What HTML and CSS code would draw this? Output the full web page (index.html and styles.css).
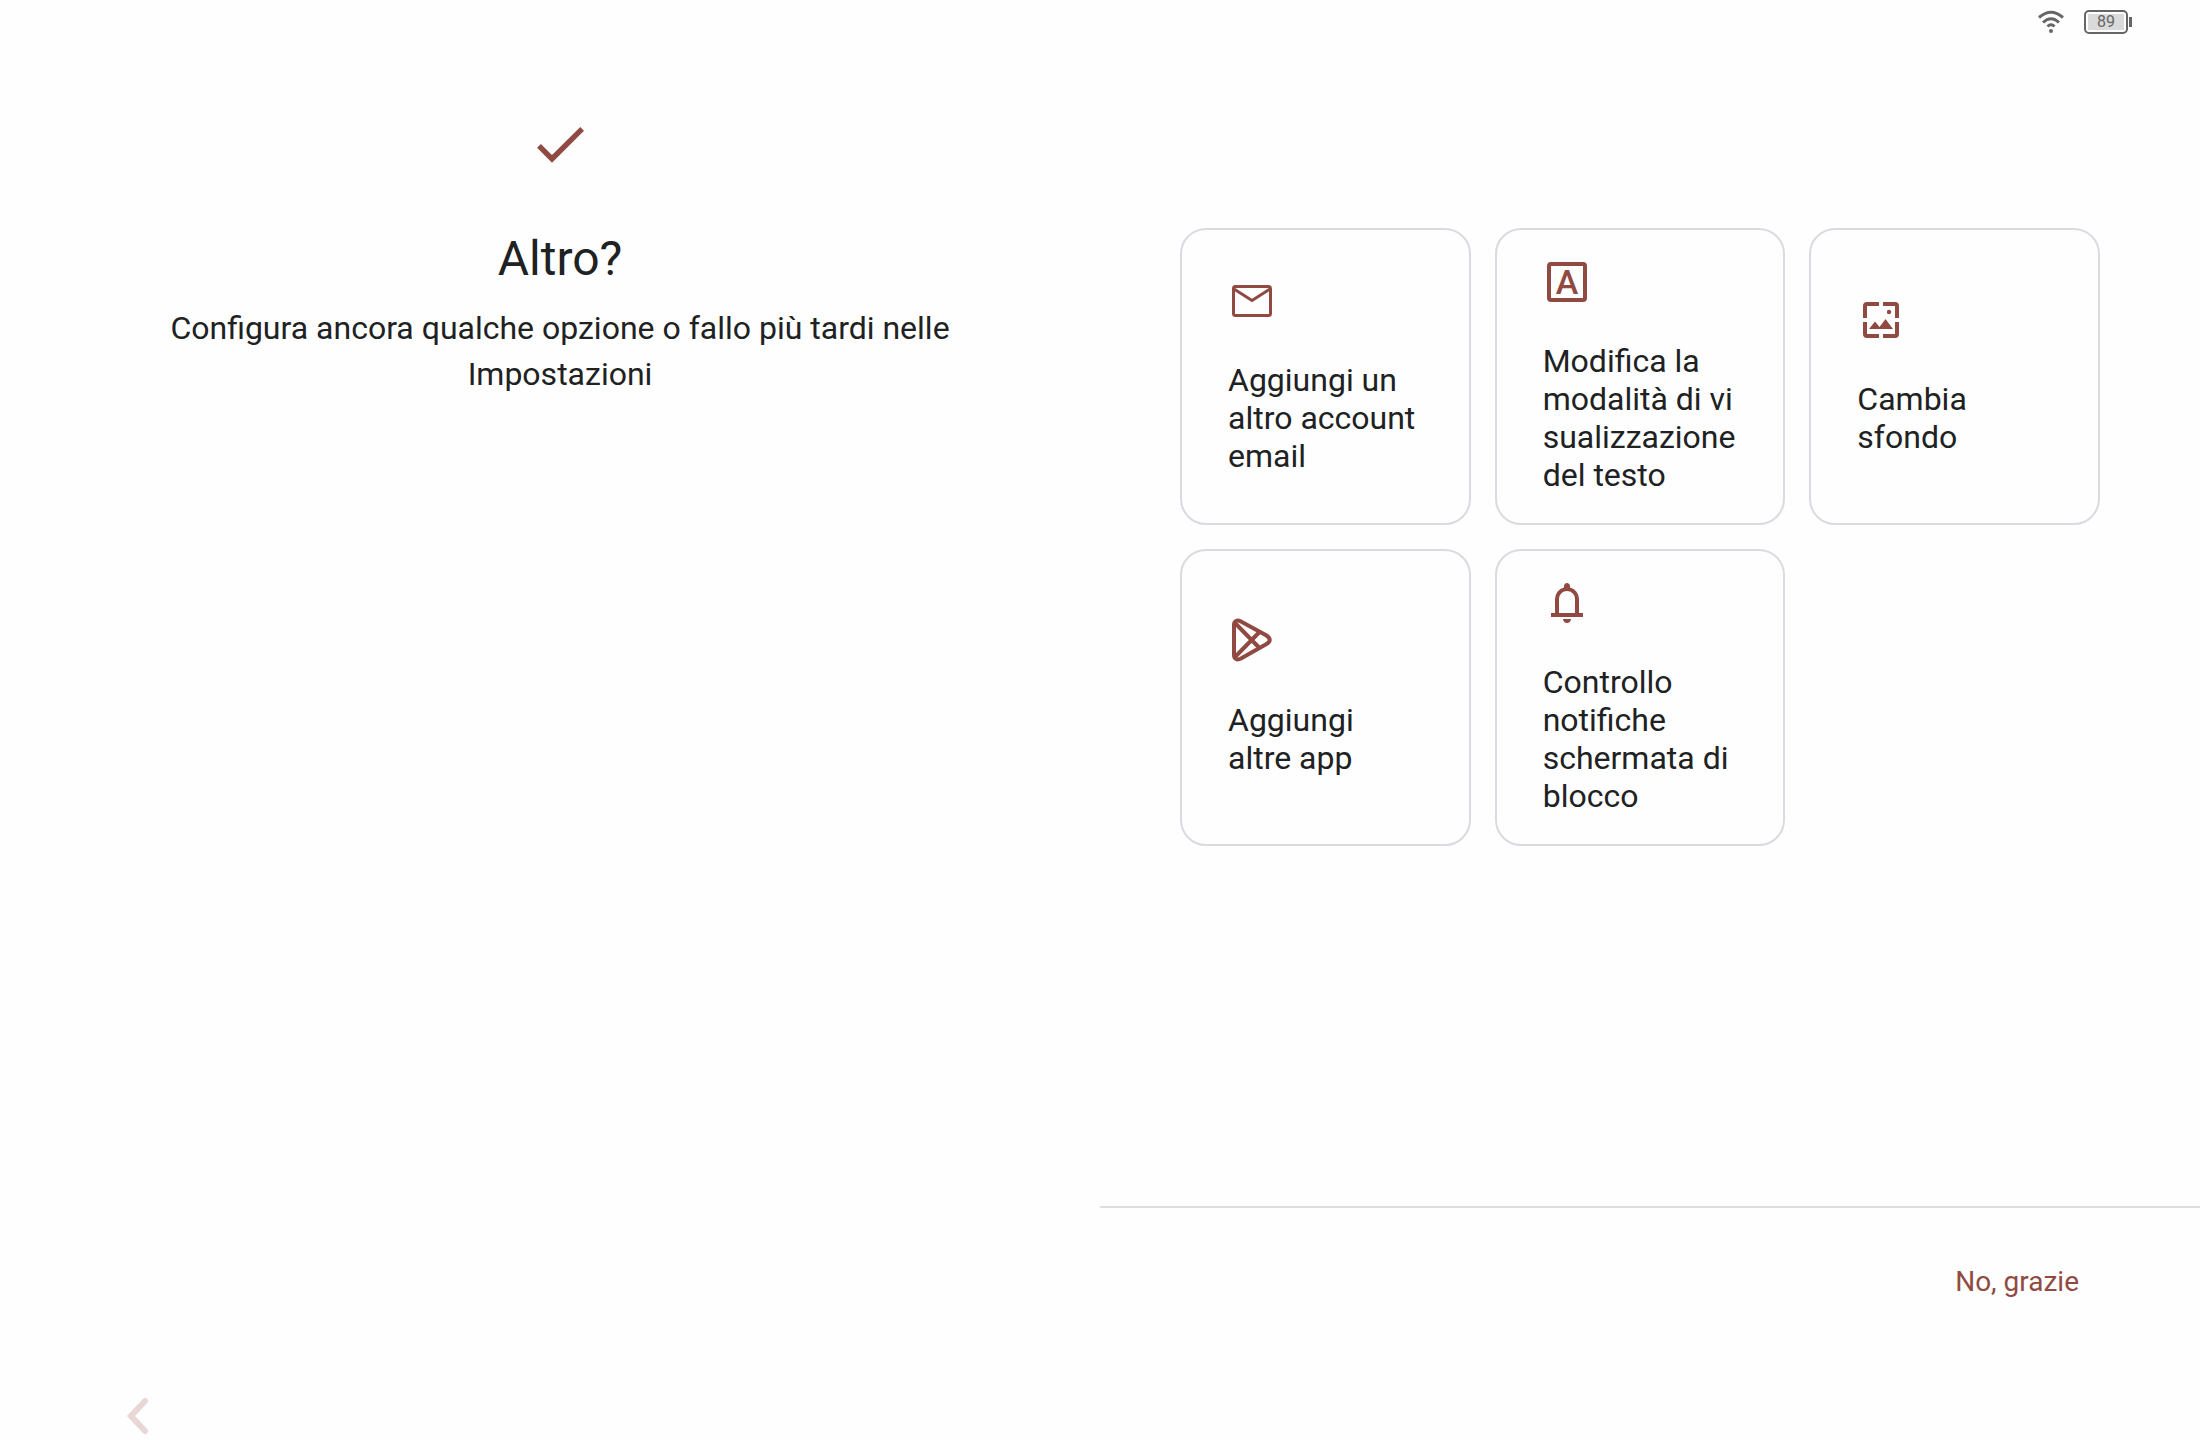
FILE: index.html
```html
<!DOCTYPE html>
<html lang="it">
<head>
  <meta charset="UTF-8" />
  <meta name="viewport" content="width=device-width, initial-scale=1.0"/>
  <title>Altro?</title>
  <link rel="stylesheet" href="styles.css">
</head>
<body>
  <header class="status-bar">
    <svg class="wifi" viewBox="0 0 26 24" role="img" aria-label="Wi-Fi">
      <path d="M1 7.5Q13-3 25 7.5M5 12.5Q13 5 21 12.5M9.5 16.5Q13 13 16.5 16.5"/>
      <circle cx="13" cy="21" r="2"/>
    </svg>
    <div class="battery">
      <span class="battery-level">89</span>
    </div>
  </header>

  <main class="setup">
    <section class="intro">
      <svg class="check" viewBox="0 0 24 24" aria-hidden="true">
        <path d="M9 16.17L4.83 12l-1.42 1.41L9 19 21 7l-1.41-1.41z"/>
      </svg>
      <h1>Altro?</h1>
      <p>Configura ancora qualche opzione o fallo più tardi nelle Impostazioni</p>
      <button class="back" type="button" aria-label="Indietro">
        <svg viewBox="0 0 24 40" aria-hidden="true">
          <path d="M20 5L6 20l14 15"/>
        </svg>
      </button>
    </section>

    <section class="options">
      <div class="cards">
        <button class="card" type="button">
          <svg class="icon" viewBox="0 0 48 48" aria-hidden="true">
            <rect class="line-thin" x="5.5" y="9.5" width="37" height="29" rx="2"/>
            <path class="line-thin" d="M6 12l18 11.5L42 12"/>
          </svg>
          <span>Aggiungi un altro account email</span>
        </button>
        <button class="card" type="button">
          <svg class="icon" viewBox="0 0 48 48" aria-hidden="true">
            <rect class="line" x="6" y="6" width="36" height="36" rx="2"/>
            <text class="letter" x="24" y="36">A</text>
          </svg>
          <span>Modifica la modalità di vi<wbr>sualizzazione del testo</span>
        </button>
        <button class="card" type="button">
          <svg class="icon" viewBox="0 0 48 48" aria-hidden="true">
            <path class="line" d="M8 22V10q0-2 2-2h12M26 8h12q2 0 2 2v12M40 26v12q0 2-2 2H26M22 40H10q-2 0-2-2V26"/>
            <path d="M12 33l6-7.5 4.5 5.5 6-8L36 33z"/>
            <circle cx="32" cy="16" r="2.2"/>
          </svg>
          <span>Cambia sfondo</span>
        </button>
        <button class="card" type="button">
          <svg class="icon" viewBox="0 0 48 48" aria-hidden="true">
            <path class="line" d="M6 8C6 4 9 2.500 13 4.500L38.500 18.500Q45 23 38.500 27L13 41.500C9 43.500 6 42 6 38ZM6.500 5.500L31.500 31M6.500 40.500L31.500 15"/>
          </svg>
          <span>Aggiungi altre app</span>
        </button>
        <button class="card" type="button">
          <svg class="icon" viewBox="0 0 24 24" aria-hidden="true">
            <path d="M4 19v-2h2v-7q0-2.075 1.25-3.687T10.5 4.2v-.7q0-.625.438-1.062T12 2t1.063.438T13.5 3.5v.7q2 .5 3.25 2.113T18 10v7h2v2Zm8 3q-.825 0-1.412-.587T10 20h4q0 .825-.587 1.413T12 22Zm-4-5h8v-7q0-1.65-1.175-2.825T12 6T9.175 7.175T8 10Z"/>
          </svg>
          <span>Controllo notifiche schermata di blocco</span>
        </button>
      </div>
      <footer class="actions">
        <button class="skip" type="button">No, grazie</button>
      </footer>
    </section>
  </main>
</body>
</html>
```

FILE: styles.css
```css
/* ===== Base Styles ===== */
* {
  margin: 0;
  padding: 0;
  box-sizing: border-box;
}
body {
  display: flex;
  flex-direction: column;
  min-height: 100vh;
  background-color: #fefefe;
  font-family: Roboto, sans-serif;
  color: #202122;
}
button {
  background: none;
  border: none;
  font: inherit;
  color: inherit;
  cursor: pointer;
}
svg {
  display: block;
  fill: #904a42;
}

/* ===== Status Bar ===== */
.status-bar {
  display: flex;
  justify-content: flex-end;
  align-items: center;
  gap: 20px;
  height: 44px;
  padding-right: 72px;
}
.wifi {
  width: 26px;
  height: 24px;
  fill: #666;
}
.wifi path {
  fill: none;
  stroke: #666;
  stroke-width: 3;
}
.battery {
  display: flex;
  position: relative;
  width: 44px;
  height: 24px;
  padding: 2px;
  border: 2px solid #666;
  border-radius: 5px;
}
.battery::after {
  content: "";
  position: absolute;
  top: 5px;
  right: -6px;
  width: 3px;
  height: 10px;
  background: #666;
}
.battery-level {
  flex: 1;
  background: #dadada;
  color: #666;
  font-size: 16px;
  line-height: 16px;
  text-align: center;
}

/* ===== Layout ===== */
.setup {
  flex: 1;
  display: grid;
  grid-template-columns: 1fr 1fr;
}
.intro {
  display: flex;
  flex-direction: column;
  align-items: center;
  padding: 68px 140px 4px 160px;
  text-align: center;
}
.check {
  width: 64px;
  height: 64px;
  margin-bottom: 55px;
}
.intro h1 {
  margin-bottom: 18px;
  font-size: 48px;
  font-weight: 400;
  line-height: 56px;
}
.intro p {
  font-size: 32px;
  line-height: 46px;
}
.back {
  align-self: flex-start;
  margin-top: auto;
  margin-left: -35px;
}
.back svg {
  width: 24px;
  height: 40px;
}
.back path {
  fill: none;
  stroke: #e9d7d6;
  stroke-width: 6;
  stroke-linecap: round;
}

/* ===== Option Cards ===== */
.options {
  display: flex;
  flex-direction: column;
}
.cards {
  display: grid;
  grid-template-columns: repeat(3, 1fr);
  gap: 24px;
  padding: 184px 100px 0 80px;
}
.card {
  display: flex;
  flex-direction: column;
  justify-content: center;
  align-items: flex-start;
  gap: 36px;
  min-height: 297px;
  padding: 24px 46px 26px;
  border: 2px solid #dadae0;
  border-radius: 26px;
  font-size: 32px;
  line-height: 38px;
  text-align: left;
}
.icon {
  width: 48px;
  height: 48px;
}
.icon .line,
.icon .line-thin {
  fill: none;
  stroke: #904a42;
  stroke-width: 4;
}
.icon .line-thin {
  stroke-width: 3;
}
.icon .letter {
  font-size: 34px;
  font-weight: 500;
  text-anchor: middle;
}

/* ===== Footer ===== */
.actions {
  display: flex;
  justify-content: flex-end;
  align-items: flex-start;
  height: 234px;
  margin-top: auto;
  padding: 54px 121px 0 0;
  border-top: 2px solid #dedede;
}
.skip {
  color: #904a42;
  font-size: 28px;
  line-height: 40px;
}
```
